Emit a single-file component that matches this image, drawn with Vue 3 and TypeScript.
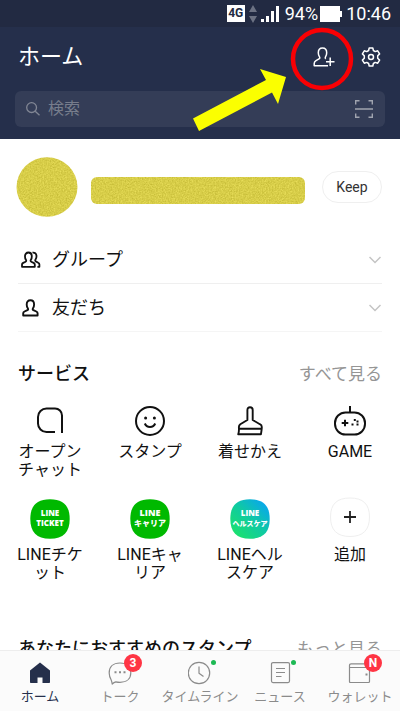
<script setup lang="ts">
import { ref } from 'vue'

interface Row { id: string; label: string }
interface Service { id: string; label: string; tile?: boolean }
interface Tab { id: string; label: string; badge?: string; dot?: boolean }

const query = ref('')
const activeTab = ref('home')

const rows: Row[] = [
  { id: 'groups', label: 'グループ' },
  { id: 'friends', label: '友だち' },
]

const services: Service[] = [
  { id: 'openchat', label: 'オープンチャット' },
  { id: 'stamp', label: 'スタンプ' },
  { id: 'theme', label: '着せかえ' },
  { id: 'game', label: 'GAME' },
  { id: 'ticket', label: 'LINEチケット', tile: true },
  { id: 'career', label: 'LINEキャリア', tile: true },
  { id: 'health', label: 'LINEヘルスケア', tile: true },
  { id: 'add', label: '追加', tile: true },
]

const tabs: Tab[] = [
  { id: 'home', label: 'ホーム' },
  { id: 'talk', label: 'トーク', badge: '3' },
  { id: 'timeline', label: 'タイムライン', dot: true },
  { id: 'news', label: 'ニュース', dot: true },
  { id: 'wallet', label: 'ウォレット', badge: 'N' },
]
</script>

<template>
  <div class="app" lang="ja">
    <header class="header">
      <div class="status">
        <span class="network">4G</span>
        <svg class="updown" width="8" height="18" viewBox="0 0 8 18" aria-hidden="true">
          <path d="M4 0 8 7H0zM4 18 0 11h8z" fill="#6c7283" />
        </svg>
        <svg class="signal" width="18" height="16" viewBox="0 0 18 16" aria-hidden="true">
          <path d="M0 13h3v3H0zM5 10h3v6H5zM10 5h3v11h-3zM15 0h3v16h-3z" fill="#fff" />
        </svg>
        <span class="percent">94%</span>
        <svg class="battery" width="22" height="16" viewBox="0 0 22 16" aria-hidden="true">
          <path d="M0 0h20v5h2v6h-2v5H0z" fill="#fff" />
        </svg>
        <time class="clock">10:46</time>
      </div>

      <div class="titlebar">
        <h1 class="title">ホーム</h1>
        <button class="icon-button marked" type="button" aria-label="友だち追加">
          <svg width="22" height="20" viewBox="0 0 22 20" fill="none" stroke="#fff" stroke-width="1.5" stroke-linejoin="round">
            <path d="M15 18.700H1.200v-2.200c0-1.200.7-2.200 1.800-2.900l3-1.700c.9-.5 1-1.200.5-2-.8-1.300-1.200-2.500-1.200-4.100C5.300 3 7 1 9.500 1s4.200 2 4.200 4.800c0 1.600-.4 2.800-1.200 4.100-.5.800-.4 1.400.2 1.900" />
            <path d="M17.200 10.500v8.500M13 14.700h8.500" />
          </svg>
          <svg class="ring" width="64" height="64" viewBox="0 0 64 64" aria-hidden="true">
            <circle cx="32" cy="32" r="29" fill="none" stroke="#f90004" stroke-width="4.500" />
          </svg>
          <svg class="arrow" width="96" height="66" viewBox="0 0 96 66" aria-hidden="true">
            <path d="M2 51.500 75 13 69 2 95 10 87 37 81 25.500 8 64z" fill="#fbff00" />
          </svg>
        </button>
        <button class="icon-button" type="button" aria-label="設定">
          <svg width="20" height="20" viewBox="0 0 20 20" fill="none" stroke="#fff" stroke-width="1.500" stroke-linejoin="round">
            <path d="M8.200 1h3.600l.6 2.500 1.800 1.100 2.500-.8 1.900 3.100-1.900 1.900v2.400l1.900 1.900-1.900 3.100-2.500-.8-1.800 1.100-.6 2.500H8.200l-.6-2.500-1.800-1.100-2.500.8-1.900-3.100 1.900-1.900V8.800L1.400 6.900l1.900-3.100 2.500.8 1.800-1.100z" />
            <circle cx="10" cy="10" r="2.500" />
          </svg>
        </button>
      </div>

      <div class="search">
        <svg width="14" height="14" viewBox="0 0 14 14" fill="none" stroke="#828795" stroke-width="1.300" aria-hidden="true">
          <circle cx="5.600" cy="5.600" r="4.900" />
          <path d="m9.200 9.200 4.300 4.100" />
        </svg>
        <input v-model="query" class="search-input" type="text" placeholder="検索" aria-label="検索" />
        <button class="scan" type="button" aria-label="コードを読み取る">
          <svg width="20" height="20" viewBox="0 0 20 20" fill="none" stroke="#a0a4af" stroke-width="1.400">
            <path d="M1.700 5.500V1.700h3.800M14.500 1.700h3.800v3.800M18.300 14.500v3.800h-3.800M5.500 18.300H1.700v-3.800M1 10h18" />
          </svg>
        </button>
      </div>
    </header>

    <main class="content">
      <svg class="defs" width="0" height="0" aria-hidden="true">
        <filter id="grain" x="0" y="0" width="100%" height="100%" color-interpolation-filters="sRGB">
          <feTurbulence type="fractalNoise" baseFrequency="0.7" numOctaves="2" seed="4" result="n" />
          <feColorMatrix in="n" type="matrix" values="0.2 0 0 0 0.745  0.2 0 0 0 0.705  0.2 0 0 0 0.185  0 0 0 0 1" />
          <feComposite in2="SourceAlpha" operator="in" />
        </filter>
      </svg>

      <section class="profile">
        <svg class="avatar" width="62" height="60" viewBox="0 0 62 60" aria-hidden="true">
          <ellipse cx="31" cy="30" rx="30.500" ry="29.700" fill="#d8cd48" filter="url(#grain)" />
        </svg>
        <div class="name"></div>
        <button class="keep" type="button">Keep</button>
      </section>

      <nav class="rows">
        <button v-for="row in rows" :key="row.id" class="row" type="button">
          <svg v-if="row.id === 'groups'" width="20" height="18" viewBox="0 0 20 18" fill="none" stroke="#111" stroke-width="1.800" stroke-linejoin="round">
            <path d="M1 15.800v-2.200c0-.8.5-1.300 1.200-1.700l2.400-1.200c.8-.4.8-1.100.3-1.900C4.200 7.700 4 6.700 4 5.400 4 3.100 5.300 1.500 7.400 1.500s3.400 1.600 3.400 3.900c0 1.300-.2 2.300-.9 3.400-.5.8-.5 1.500.3 1.900l2.400 1.200c.7.4 1.200.9 1.200 1.700v2.200z" />
            <path d="M11.500 1.700c2.100-.5 4 .9 4 3.500 0 1.300-.3 2.300-1 3.400-.5.8-.4 1.400.3 1.800l2.400 1.300c.8.4 1.200.9 1.200 1.700v2.400h-2" />
          </svg>
          <svg v-else width="20" height="18" viewBox="0 0 20 18" fill="none" stroke="#111" stroke-width="1.900" stroke-linejoin="round">
            <path d="M2.200 16.500v-2.300c0-.8.5-1.300 1.300-1.700l2.900-1.400c.9-.4.9-1.100.4-1.900-.8-1.100-1.100-2.200-1.100-3.700C5.700 3 7.100 1.300 9.400 1.300S13.100 3 13.100 5.500c0 1.500-.3 2.600-1.100 3.700-.5.8-.5 1.500.4 1.900l2.900 1.400c.8.400 1.300.900 1.300 1.700v2.300z" />
          </svg>
          <span class="row-label">{{ row.label }}</span>
          <svg width="12" height="8" viewBox="0 0 12 8" fill="none" stroke="#c4c4c4" stroke-width="1.500">
            <path d="m.5 1 5.500 5.500L11.500 1" />
          </svg>
        </button>
      </nav>

      <section class="section">
        <div class="section-head">
          <h2 class="heading">サービス</h2>
          <a class="more" href="#services">すべて見る</a>
        </div>
        <div class="grid">
          <a v-for="s in services" :key="s.id" class="service" :href="'#' + s.id">
            <svg v-if="!s.tile" width="32" height="30" viewBox="0 0 32 30" fill="none" stroke="#111" stroke-width="2" stroke-linejoin="round">
              <path v-if="s.id === 'openchat'" d="M21 26H12.500a8.500 8.500 0 0 1-8.500-8.500v-6.500a8.500 8.500 0 0 1 8.500-8.500h8.500a7 7 0 0 1 7 7V27" />
              <template v-else-if="s.id === 'stamp'">
                <circle cx="16" cy="15" r="14" />
                <path d="M10.800 17.500c.9 2.200 2.700 3.500 5.200 3.500s4.300-1.300 5.200-3.500" />
                <circle cx="11.600" cy="12" r="1.500" fill="#111" stroke="none" />
                <circle cx="20.400" cy="12" r="1.500" fill="#111" stroke="none" />
              </template>
              <template v-else-if="s.id === 'theme'">
                <path d="M13.400 14V4c0-1.700 1-2.700 2.600-2.700s2.700 1 2.700 2.700v10l7.200 4.200c1.300.7 1.900 1.600 1.900 2.700 0 2-.4 4.400-.9 7.400H4.200c.9-2 .9-4.300.7-7.200 0-1.300.4-2.200 1.400-2.900zM5.500 22.800h22" stroke-width="1.900" />
              </template>
              <template v-else>
                <path d="M16 0v6" />
                <rect x="1" y="6.500" width="30" height="22" rx="10.500" />
                <path d="M11 13.700v6.600M7.700 17h6.600" />
                <path d="M19.800 14h2M17.500 18.500h2M22.500 18.500h2M22.500 15.500h2" stroke-width="2" />
              </template>
            </svg>

            <svg v-else width="40" height="40" viewBox="0 0 40 40">
              <defs v-if="s.id === 'health'">
                <linearGradient id="health-fill" x1="0.150" y1="0.900" x2="0.900" y2="0.150">
                  <stop offset="0" stop-color="#1be070" />
                  <stop offset="0.500" stop-color="#10cba0" />
                  <stop offset="1" stop-color="#09a9e9" />
                </linearGradient>
              </defs>
              <template v-if="s.id === 'add'">
                <path d="M20-1C33-1 39.500 5 39.500 18S33 37.500 20 37.500.5 31 .5 18 7-1 20-1z" fill="#fff" stroke="#efefef" />
                <path d="M20 12v12M14 18h12" stroke="#222" stroke-width="1.800" />
              </template>
              <path
                v-else
                d="M20 .3C33.500.3 39.700 7 39.700 20S33.500 39.700 20 39.700.3 33 .3 20 6.500.3 20 .3z"
                :fill="s.id === 'health' ? 'url(#health-fill)' : '#00b900'"
              />
              <g v-if="s.id !== 'add'" class="tile-text" text-anchor="middle">
                <text :class="{ 'tile-large': s.id === 'career' }" x="20" y="17">LINE</text>
                <text v-if="s.id === 'ticket'" x="20" y="27">TICKET</text>
                <text v-else-if="s.id === 'career'" x="20" y="27">キャリア</text>
                <text v-else class="tile-small" x="20" y="27">ヘルスケア</text>
              </g>
            </svg>
            <span class="service-label">{{ s.label }}</span>
          </a>
        </div>
      </section>

      <section class="section recommend">
        <div class="section-head">
          <h2 class="heading">あなたにおすすめのスタンプ</h2>
          <a class="more" href="#stamps">もっと見る</a>
        </div>
      </section>
    </main>

    <nav class="tabs">
      <button
        v-for="tab in tabs"
        :key="tab.id"
        type="button"
        class="tab"
        :class="{ active: tab.id === activeTab }"
        @click="activeTab = tab.id"
      >
        <span class="tab-icon">
          <svg width="24" height="24" viewBox="0 0 24 24" fill="none" stroke="#8b8b8b" stroke-width="1.200" stroke-linejoin="round">
            <path v-if="tab.id === 'home'" d="M12 1.500 22 9.500V21.200q0 .8-.8.8H14.500v-5.500H9.500V22H2.800q-.8 0-.8-.8V9.500z" fill="#252f4b" stroke="none" />
            <template v-else-if="tab.id === 'talk'">
              <path d="M4.200 23c-.2-1.400-.4-2.400-1-4C1.800 16.600 1.200 14.300 1.200 12 1.200 6 5 2 12 2s10.800 4 10.800 9.700c0 5.800-4 9.600-10.800 9.600-1.600 0-2.900-.2-4.200-.5C6.200 21.200 5.200 22 4.200 23z" />
              <path d="M6.500 11.300h2M11 11.300h2M15.500 11.300h2" stroke-width="2" />
            </template>
            <template v-else-if="tab.id === 'timeline'">
              <circle cx="11" cy="12" r="10.700" />
              <path d="M11 5.500v6.700l4.500 3.300" />
            </template>
            <template v-else-if="tab.id === 'news'">
              <rect x="3.500" y="1.600" width="18" height="20" rx="1.500" />
              <path d="M8 7.500h9M8 11.500h9M8 15.500h5.500" />
            </template>
            <template v-else>
              <path d="M21.500 6.500v14c0 .7-.3 1-1 1H2.500c-.7 0-1-.3-1-1V4.500c0-1 .6-1.700 1.600-1.700h16.400c.7 0 1 .3 1 1v2.700M1.800 6.500h19.700" />
              <path d="M17.500 13.500h2" stroke-width="2" />
            </template>
          </svg>
          <span v-if="tab.badge" class="badge">{{ tab.badge }}</span>
          <span v-if="tab.dot" class="dot"></span>
        </span>
        <span class="tab-label">{{ tab.label }}</span>
      </button>
    </nav>
  </div>
</template>

<style>
body {
  margin: 0;
  background: #fff;
}
</style>

<style scoped>
.app {
  display: flex;
  flex-direction: column;
  height: 100vh;
  background: #fff;
  color: #111;
  font-family: Roboto, "Noto Sans CJK JP", sans-serif;
}
button {
  margin: 0;
  padding: 0;
  border: 0;
  background: none;
  color: inherit;
  font: inherit;
  cursor: pointer;
}
a {
  color: inherit;
  text-decoration: none;
}
svg {
  display: block;
  flex: none;
}
.header {
  flex: none;
  padding-bottom: 12px;
  background: #252f4b;
  color: #fff;
}
.status {
  display: flex;
  align-items: center;
  justify-content: flex-end;
  height: 27px;
  padding-right: 9px;
  background: #222a42;
  font-size: 18px;
}
.network {
  width: 18px;
  height: 17px;
  background: #fff;
  color: #222a42;
  font-size: 12px;
  font-weight: 700;
  line-height: 17px;
  text-align: center;
}
.updown {
  margin-left: 4px;
}
.signal {
  margin-left: 4px;
}
.percent {
  margin-left: 6px;
}
.battery {
  margin-left: 2px;
}
.clock {
  margin-left: 4px;
}
.titlebar {
  display: flex;
  align-items: center;
  gap: 26px;
  height: 60px;
  padding: 0 19px 0 18px;
}
.title {
  flex: 1;
  margin: 0;
  font-size: 22px;
  font-weight: 400;
  line-height: 32px;
}
.icon-button {
  position: relative;
  z-index: 1;
}
.ring {
  position: absolute;
  top: -20px;
  left: -23px;
}
.arrow {
  position: absolute;
  top: 20px;
  left: -122px;
}
.search {
  display: flex;
  align-items: center;
  height: 36px;
  margin: 4px 15px 0;
  padding: 0 11px;
  border-radius: 6px;
  background: #343d57;
}
.search-input {
  flex: 1;
  min-width: 0;
  margin: 0 0 0 8px;
  padding: 0;
  border: 0;
  outline: 0;
  background: none;
  color: #fff;
  font: inherit;
  font-size: 16px;
  line-height: 24px;
}
.search-input::placeholder {
  color: #777d8c;
  opacity: 1;
}
.content {
  flex: 1;
  min-height: 0;
  overflow: hidden;
}
.defs {
  position: absolute;
}
.profile {
  display: flex;
  align-items: center;
  height: 95px;
  padding: 0 18px 2px 16px;
}
.name {
  flex: 1;
  height: 27px;
  margin: 8px 17px 0 13px;
  border-radius: 6px;
  background: #d8cd48;
  filter: url(#grain);
}
.keep {
  width: 60px;
  height: 32px;
  border: 1px solid #efefef;
  border-radius: 16px;
  color: #333;
  font-size: 14px;
}
.rows {
  padding: 0 18px;
}
.row {
  display: flex;
  align-items: center;
  width: 100%;
  height: 48px;
  padding: 0 1px 0 3px;
  border-bottom: 1px solid #efefef;
  text-align: left;
}
.row:last-child {
  border-color: #f5f5f5;
}
.row-label {
  flex: 1;
  margin-left: 11px;
  font-size: 18px;
  line-height: 24px;
}
.section {
  padding-top: 30px;
}
.section-head {
  display: flex;
  align-items: center;
  justify-content: space-between;
  padding: 0 18px;
  line-height: 24px;
}
.heading {
  margin: 0;
  font-size: 18px;
  font-weight: 500;
}
.more {
  color: #959595;
  font-size: 17px;
}
.grid {
  display: grid;
  grid-template-columns: repeat(4, 1fr);
  gap: 20px 0;
  padding-top: 20px;
}
.service {
  display: flex;
  flex-direction: column;
  align-items: center;
  gap: 7px;
}
.service svg {
  overflow: visible;
}
.service-label {
  width: 68px;
  font-size: 16px;
  line-height: 18px;
  text-align: center;
  word-break: break-all;
}
.tile-text {
  fill: #fff;
  font-family: "Open Sans", "Noto Sans CJK JP", sans-serif;
  font-size: 8px;
  font-weight: 800;
}
.tile-large {
  font-size: 9px;
}
.tile-small {
  font-size: 7px;
}
.recommend {
  padding-top: 55px;
}
.tabs {
  display: grid;
  flex: none;
  grid-template-columns: repeat(5, 1fr);
  height: 60px;
  border-top: 1px solid #ededed;
  background: #fbfbfb;
}
.tab {
  display: flex;
  flex-direction: column;
  align-items: center;
  padding-top: 10px;
  color: #8b8b8b;
  font-size: 13px;
  line-height: 18px;
  white-space: nowrap;
}
.active {
  color: #252f4b;
}
.tab-icon {
  position: relative;
}
.tab-label {
  margin-top: 3px;
}
.badge {
  position: absolute;
  top: -7px;
  left: 16px;
  width: 18px;
  height: 18px;
  border-radius: 50%;
  background: #ff3544;
  color: #fff;
  font-size: 12px;
  font-weight: 700;
  line-height: 18px;
  text-align: center;
}
.dot {
  position: absolute;
  top: -1px;
  left: 23px;
  width: 5px;
  height: 5px;
  border-radius: 50%;
  background: #1db954;
}
</style>
